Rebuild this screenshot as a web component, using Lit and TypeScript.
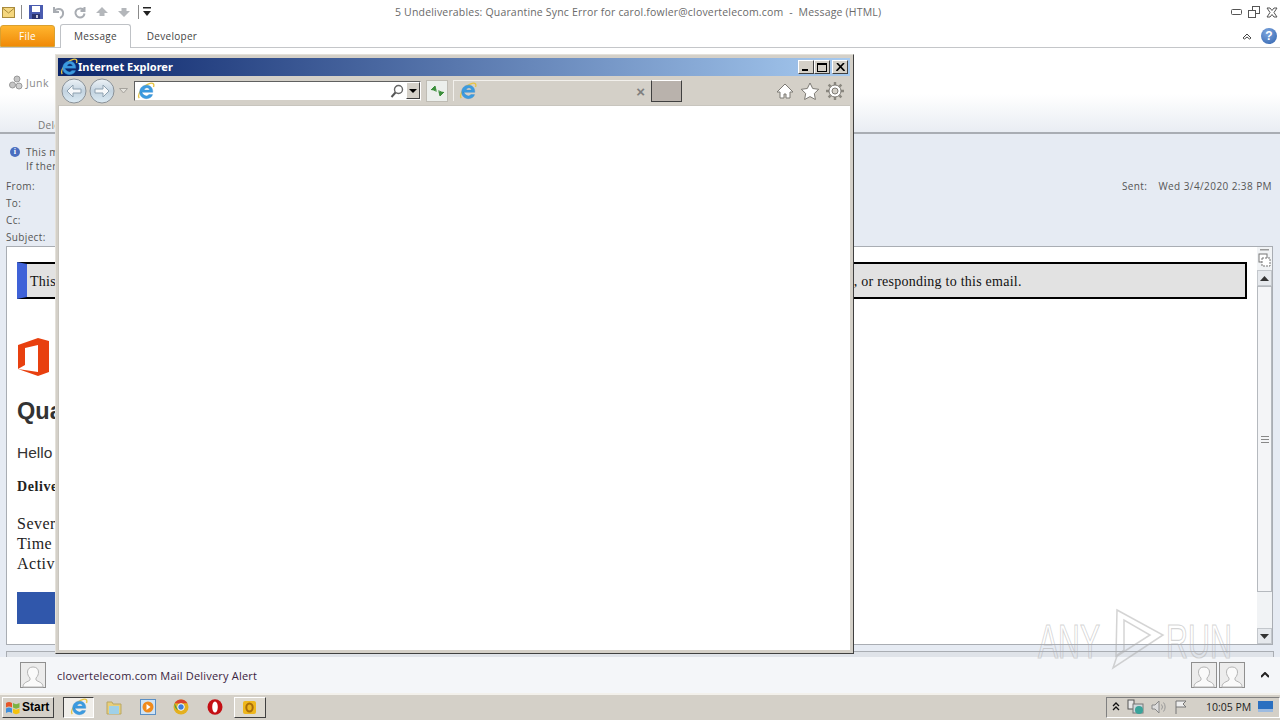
import { LitElement, html, css } from "lit";
import { customElement } from "lit/decorators.js";

const ieLogo = (s: number) => html`<svg width=${s} height=${s} viewBox="0 0 20 20">
  <path d="M2.500 18C-.5 14 7 3.500 14.500 1.500c3.500-1 5 .8 3.800 4" fill="none" stroke="#e6c445" stroke-width="1.500"/>
  <path d="M4.500 11.500h13c.4-5-2.800-8-7-8-4.500 0-7.500 3.300-7.500 7.700S6 18.500 10.500 18.500c3.500 0 6-1.600 6.800-4.500h-4.200c-.5 1-1.400 1.500-2.500 1.500-2 0-4.300-1.600-5.100-4zM8 9c.4-1.700 1.700-2.500 3-2.500S13.600 7.300 13.900 9z" fill="#3b9be0" fill-rule="evenodd" stroke="#2f83c8" stroke-width=".4"/>
</svg>`;
const person = () => html`<svg class="person" width="26" height="26" viewBox="0 0 26 26">
  <rect x=".5" y=".5" width="25" height="25" fill="#ececec" stroke="#8f8f8f"/>
  <path d="M3 25c0-5 5-5 7-7v-2c-2-2-2.500-4-2.500-6 0-3 2-5 5.500-5s5.500 2 5.500 5c0 2-.5 4-2.500 6v2c2 2 7 2 7 7z" fill="#fafafa" stroke="#b5b5b5"/>
</svg>`;
const navArrow = (dir: number) => html`<svg width="26" height="26" viewBox="0 0 26 26">
  <defs><linearGradient id="nv${dir}" x1="0" y1="0" x2="0" y2="1"><stop offset="0" stop-color="#eef3f7"/><stop offset=".5" stop-color="#c3d3e0"/><stop offset="1" stop-color="#dcebf4"/></linearGradient></defs>
  <circle cx="13" cy="13" r="12" fill="url(#nv${dir})" stroke="#8b9298"/>
  <path d=${dir < 0 ? "M6 13l6-6v4h8v4h-8v4z" : "M20 13l-6-6v4H6v4h8v4z"} fill="#f6f8fa" stroke="#8ea1b0"/>
</svg>`;

@customElement("app-root")
export class AppRoot extends LitElement {
  static styles = css`
    :host { display: block; width: 1280px; height: 720px; position: relative; overflow: hidden; background: #fff; font-family: "Open Sans", "Noto Sans", sans-serif; font-size: 10px; color: #444; }
    .page { display: flex; flex-direction: column; height: 720px; }
    .title { height: 24px; display: flex; align-items: center; flex: none; background: #fff; }
    .qat { display: flex; align-items: center; gap: 8px; padding-left: 2px; width: 388px; flex: none; box-sizing: content-box; }
    .sep { width: 1px; height: 14px; background: #8a8a8a; margin: 0 -1px; }
    .title-text { flex: 1; margin-left: 5px; font-size: 10.500px; color: #6a6a6a; letter-spacing: .18px; white-space: pre; }
    .winbtns { display: flex; gap: 6px; padding-right: 2px; align-items: center; }
    .tabs { height: 23px; flex: none; display: flex; align-items: flex-end; border-bottom: 1px solid #c4c6c9; box-sizing: content-box; position: relative; }
    .file { width: 55px; height: 22px; background: linear-gradient(#ffb52e, #f08a08); color: #fff; border-radius: 3px 3px 0 0; display: flex; align-items: center; justify-content: center; font-size: 10px; letter-spacing: .3px; border: 1px solid #d9a030; box-sizing: border-box; }
    .tab { height: 23px; display: flex; align-items: center; justify-content: center; font-size: 10px; letter-spacing: .3px; color: #444; box-sizing: border-box; }
    .tab.on { width: 71px; margin-left: 5px; background: #fff; border: 1px solid #bfc2c6; border-bottom: none; border-radius: 3px 3px 0 0; margin-bottom: -1px; height: 24px; padding-bottom: 2px; }
    .tab.dev { width: 82px; }
    .tabs-right { margin-left: auto; display: flex; align-items: center; gap: 9px; padding-right: 3px; align-self: center; }
    .help { width: 16px; height: 16px; border-radius: 50%; background: radial-gradient(circle at 40% 30%, #7ea6de, #2f62ae); color: #fff; font: bold 12px "Liberation Sans", sans-serif; display: flex; align-items: center; justify-content: center; }
    .ribbon { height: 86px; flex: none; background: linear-gradient(#fff 55%, #e9edf3); border-bottom: 2px solid #a9adb3; box-sizing: border-box; position: relative; display: flex; flex-direction: column; padding-left: 8px; }
    .junk { display: flex; align-items: center; gap: 3px; margin-top: 27px; color: #8a8a8a; font-size: 10.500px; letter-spacing: .4px; }
    .del { margin-top: 27px; margin-left: 30px; color: #777; font-size: 10px; letter-spacing: .3px; }
    .head { height: 112px; flex: none; background: #e6ebf3; position: relative; padding-left: 6px; box-sizing: border-box; display: flex; flex-direction: column; }
    .info { display: flex; gap: 6px; margin-top: 11px; margin-left: 4px; font-size: 10px; line-height: 14px; color: #555; letter-spacing: .35px; }
    .dot { width: 10px; height: 10px; margin-top: 2px; border-radius: 50%; background: #4b6fc0; color: #fff; font: bold 8px/10px "Liberation Serif", serif; text-align: center; }
    .fields { margin-top: 5px; line-height: 17px; font-size: 10px; color: #555; letter-spacing: .35px; }
    .sent { position: absolute; top: 45px; right: 8px; color: #555; font-size: 10px; letter-spacing: .42px; display: flex; gap: 11px; }
    .body { height: 399px; flex: none; background: #e6ebf3; padding: 0 0 0 6px; box-sizing: border-box; display: flex; }
    .mail { width: 1267px; height: 399px; background: #fff; border: 1px solid #a9adb3; box-sizing: border-box; padding: 15px 0 0 10px; position: relative; display: flex; flex-direction: column; font-family: "Liberation Serif", serif; color: #222; }
    .banner { width: 1230px; height: 37px; flex: none; box-sizing: border-box; border: 2px solid #000; border-left: 10px solid #3f62d8; background: #e2e2e2; display: flex; align-items: center; font-size: 14px; letter-spacing: .24px; color: #111; padding: 2px 0 0 3px; }
    .banner .end { margin-left: 798px; }
    .logo { margin-top: 39px; display: block; }
    h1 { margin: 20px 0 0; font: bold 23.500px/30px "Liberation Sans", sans-serif; color: #333; }
    .hello { margin-top: 17px; font: 15.500px/20px "Liberation Sans", sans-serif; color: #333; }
    .deliv { margin-top: 14px; font: bold 14px/20px "Liberation Serif", serif; letter-spacing: .6px; }
    .lines { margin-top: 17px; font: 16px/20px "Liberation Serif", serif; letter-spacing: .5px; }
    .cta { margin-top: 18px; width: 200px; height: 32px; background: #3057ab; }
    .scroll { position: absolute; right: 0; top: 0; width: 15px; height: 397px; background: #f1f3f5; display: flex; flex-direction: column; align-items: center; box-sizing: border-box; padding-top: 1px; }
    .scroll-tool { flex: none; height: 22px; }
    .scroll-btn { flex: none; width: 15px; height: 16px; background: #e6e9ed; border: 1px solid #c3c7cc; box-sizing: border-box; display: flex; align-items: center; justify-content: center; }
    .thumb { flex: none; width: 15px; height: 306px; background: #f4f5f7; border: 1px solid #b5b9be; box-sizing: border-box; display: flex; align-items: center; justify-content: center; }
    .scroll-btn.down { margin-top: auto; }
    .hsplit { height: 12px; flex: none; background: #e6ebf3; padding: 0 6px; box-sizing: border-box; }
    .hsplit div { height: 6px; margin-top: 6px; border: 1px solid #a9adb3; background: #dfe3e9; }
    .people { height: 36px; flex: none; background: #f4f6f9; display: flex; align-items: center; padding: 0 8px 0 20px; gap: 11px; font-size: 11px; letter-spacing: .2px; color: #3a2340; box-sizing: border-box; }
    .people .r { margin-left: auto; display: flex; align-items: center; gap: 2px; }
    .person { display: block; }
    .chev { margin-left: 14px; margin-right: 3px; }
    .taskbar { height: 27px; flex: none; background: #d4d0c8; border-top: 2px solid #f3f1ec; display: flex; align-items: center; padding: 0 0 1px 2px; box-sizing: border-box; }
    .start { width: 52px; height: 21px; background: #d4d0c8; border: 1px solid; border-color: #fff #404040 #404040 #fff; box-sizing: border-box; display: flex; align-items: center; gap: 1px; font: bold 12px "Liberation Sans", sans-serif; color: #000; padding-left: 2px; }
    .tb-ie { margin-left: 9px; width: 31px; height: 21px; border: 1px solid; border-color: #404040 #fff #fff #404040; background: #f0eeea; box-sizing: border-box; display: flex; align-items: center; justify-content: center; }
    .tb-icons { display: flex; align-items: center; gap: 17.500px; margin-left: 12px; }
    .tb-out { margin-left: 11px; width: 32px; height: 21px; border: 1px solid; border-color: #fff #404040 #404040 #fff; box-sizing: border-box; background: #ddd9d0; display: flex; align-items: center; justify-content: center; }
    .tray { margin-left: auto; height: 21px; width: 174px; border: 1px solid; border-color: #808080 #fff #fff #808080; box-sizing: border-box; display: flex; align-items: center; gap: 7px; padding-left: 5px; font-size: 10.500px; color: #222; }
    .clock { margin-left: 10px; white-space: nowrap; }

    .ie { position: absolute; left: 55px; top: 54px; width: 799px; height: 600px; box-sizing: border-box; background: #d4d0c8; border: 1px solid; border-color: #e4e1da #404040 #404040 #e4e1da; padding: 3px 3px 3px 2px; display: flex; flex-direction: column; }
    .ie-title { height: 18px; flex: none; background: linear-gradient(90deg, #0a246a, #a6caf0); display: flex; align-items: center; padding-left: 2px; color: #fff; font: bold 11px/18px "Noto Sans", sans-serif; }
    .ie-title span { margin-top: -1px; }
    .ie-btns { margin-left: auto; display: flex; padding-right: 2px; }
    .ie-btn { width: 16px; height: 14px; background: #d4d0c8; border: 1px solid; border-color: #fff #404040 #404040 #fff; box-sizing: border-box; display: flex; align-items: center; justify-content: center; }
    .ie-btn + .ie-btn:last-child { margin-left: 2px; }
    .ie-bar { height: 29px; flex: none; display: flex; align-items: center; padding-left: 3px; }
    .nav { display: flex; gap: 2px; }
    .hist { margin-left: 4px; }
    .addr { margin-left: 6px; width: 287px; height: 20px; box-sizing: border-box; background: #fff; border: 1px solid; border-color: #606060 #fff #d4d0c8 #606060; display: flex; align-items: center; padding-left: 2px; }
    .addr .search { margin-left: auto; margin-right: 2px; }
    .addr .drop { width: 14px; height: 17px; background: #d4d0c8; border: 1px solid; border-color: #fff #404040 #404040 #fff; box-sizing: border-box; display: flex; align-items: center; justify-content: center; }
    .go { margin-left: 5px; width: 22px; height: 22px; background: #ecefec; border: 1px solid #bfbcb4; box-sizing: border-box; display: flex; align-items: center; justify-content: center; }
    .tabz { margin-left: 5px; width: 198px; height: 21px; display: flex; align-items: center; padding-left: 5px; box-sizing: border-box; border-left: 1px solid #f2f0ec; border-top: 1px solid #f2f0ec; }
    .tabz .x { margin-left: auto; margin-right: 6px; font: bold 15px "Liberation Sans", sans-serif; color: #7f7f7f; line-height: 1; }
    .newtab { width: 31px; height: 22px; background: #b9b2ac; border: 1px solid; border-color: #fff #404040 #404040 #404040; box-sizing: border-box; }
    .ie-tools { margin-left: auto; display: flex; gap: 5px; padding-right: 5px; align-items: center; }
    .ie-content { flex: 1; background: #fff; border: 1px solid #c8c5be; border-width: 1px 0 0 1px; }
    .mark { position: absolute; left: 1032px; top: 606px; pointer-events: none; display: block; }
    .mark text { font: 48px "Liberation Sans", sans-serif; fill: none; stroke: rgba(170,170,170,.5); stroke-width: 1.200px; }
  `;

  render() {
    return html`
      <div class="page">
        <div class="title">
          <div class="qat">
            <svg width="13" height="11" viewBox="0 0 13 11"><rect x=".5" y=".5" width="12" height="10" fill="#f5d77f" stroke="#a98b3c"/><path d="M.5 1l6 5 6-5" fill="none" stroke="#a98b3c"/></svg>
            <span class="sep" style="margin-left:-2px"></span>
            <svg width="14" height="14" viewBox="0 0 14 14"><rect width="14" height="14" fill="#4a5cb0"/><rect x="3" y="1" width="8" height="6" fill="#fff"/><rect x="3" y="9" width="8" height="5" fill="#2b346f"/><rect x="7" y="10" width="2" height="3" fill="#ccd"/></svg>
            <svg width="14" height="14" viewBox="0 0 14 14"><path d="M3 2v5h5M3 6.500C5 3 11 3 12 7c.5 3-1 5-3 6" fill="none" stroke="#a8acb2" stroke-width="2"/></svg>
            <svg width="14" height="14" viewBox="0 0 14 14"><path d="M11.500 2v4h-4M11 5.500C9 2.500 3.500 3 2.500 7c-.5 3 2 5.500 4.500 5.500S11 11 11.500 8.500" fill="none" stroke="#a8acb2" stroke-width="2"/></svg>
            <svg width="14" height="12" viewBox="0 0 14 12"><path d="M7 1l6 6H9.500v3h-5V7H1z" fill="#b4b7bb"/></svg>
            <svg width="14" height="12" viewBox="0 0 14 12"><path d="M7 11l6-6H9.500V2h-5v3H1z" fill="#b4b7bb"/></svg>
            <span class="sep"></span>
            <svg style="margin-left:-3px" width="8" height="10" viewBox="0 0 8 10"><rect y="0" width="8" height="1.500" fill="#222"/><path d="M0 4h8L4 9z" fill="#222"/></svg>
          </div>
          <div class="title-text">5 Undeliverables: Quarantine Sync Error for carol.fowler@clovertelecom.com  -  Message (HTML)</div>
          <div class="winbtns">
            <svg width="11" height="6" viewBox="0 0 11 6"><rect x=".5" y=".5" width="10" height="5" rx="1" fill="#fff" stroke="#555"/></svg>
            <svg width="12" height="12" viewBox="0 0 12 12"><rect x="4.500" y=".5" width="7" height="7" fill="#fff" stroke="#555"/><rect x=".5" y="4.500" width="7" height="7" fill="#fff" stroke="#555"/></svg>
            <svg width="12" height="11" viewBox="0 0 12 11"><path d="M1 1h3l2 2.500L8 1h3L8 5.500l3 4.500H8L6 7.500 4 10H1l3-4.500z" fill="#fff" stroke="#555"/></svg>
          </div>
        </div>
        <div class="tabs">
          <div class="file">File</div>
          <div class="tab on">Message</div>
          <div class="tab dev">Developer</div>
          <div class="tabs-right">
            <svg width="10" height="8" viewBox="0 0 10 8"><path d="M1 6l4-4 4 4-1.500 1L5 5 2.500 7z" fill="#fff" stroke="#444"/></svg>
            <div class="help">?</div>
          </div>
        </div>
        <div class="ribbon">
          <div class="junk">
            <svg width="15" height="16" viewBox="0 0 15 16"><circle cx="9" cy="4" r="3" fill="#c5c5c5" stroke="#999"/><circle cx="4.500" cy="10" r="3" fill="#c5c5c5" stroke="#999"/><circle cx="11" cy="11" r="3" fill="#d0d0d0" stroke="#999"/></svg>
            Junk
          </div>
          <div class="del">Delete</div>
        </div>
        <div class="head">
          <div class="info"><div class="dot">i</div><div>This message<br />If there are problems</div></div>
          <div class="fields">From:<br />To:<br />Cc:<br />Subject:</div>
          <div class="sent"><span>Sent:</span><span>Wed 3/4/2020 2:38 PM</span></div>
        </div>
        <div class="body">
          <div class="mail">
            <div class="banner"><span>This</span><span class="end">, or responding to this email.</span></div>
            <svg class="logo" width="33" height="38" viewBox="0 0 33 38"><path d="M1 7L21 0l11 3v31l-11 4L1 31l20 3V7L8 10v17l-7 4z" fill="#e8400f"/></svg>
            <h1>Quarantine</h1>
            <div class="hello">Hello</div>
            <div class="deliv">Delivery</div>
            <div class="lines">Severity<br />Time<br />Activity</div>
            <div class="cta"></div>
            <div class="scroll">
              <svg class="scroll-tool" width="15" height="22" viewBox="0 0 15 22"><rect x="3" y="1" width="9" height="1.500" fill="#999"/><rect x="2" y="6" width="8" height="8" fill="#fff" stroke="#777"/><rect x="5" y="10" width="8" height="8" fill="#fff" stroke="#777" stroke-dasharray="2 1"/></svg>
              <div class="scroll-btn"><svg width="9" height="5" viewBox="0 0 9 5"><path d="M0 5l4.500-5L9 5z" fill="#333"/></svg></div>
              <div class="thumb"><svg width="8" height="7" viewBox="0 0 8 7"><path d="M0 .5h8M0 3.500h8M0 6.500h8" stroke="#888"/></svg></div>
              <div class="scroll-btn down"><svg width="9" height="5" viewBox="0 0 9 5"><path d="M0 0l4.500 5L9 0z" fill="#333"/></svg></div>
            </div>
          </div>
        </div>
        <div class="hsplit"><div></div></div>
        <div class="people">
          ${person()}
          <span>clovertelecom.com Mail Delivery Alert</span>
          <div class="r">
            ${person()}${person()}
            <svg class="chev" width="8" height="6" viewBox="0 0 8 6"><path d="M0 5l4-4 4 4" fill="none" stroke="#222" stroke-width="2"/></svg>
          </div>
        </div>
        <div class="taskbar">
          <div class="start">
            <svg width="16" height="16" viewBox="0 0 16 16"><path d="M1 4c2-1.500 4-1.500 6 0v4.500c-2-1.500-4-1.500-6 0z" fill="#e5562a"/><path d="M8 4c2 1.500 4 1.500 6.500 0v4.500c-2.500 1.500-4.500 1.500-6.500 0z" fill="#7cb342"/><path d="M1 9.500c2-1.500 4-1.500 6 0V14c-2-1.500-4-1.500-6 0z" fill="#3f8fdc"/><path d="M8 9.500c2 1.500 4 1.500 6.500 0V14c-2.500 1.500-4.500 1.500-6.500 0z" fill="#f4c20d"/></svg>
            Start
          </div>
          <div class="tb-ie">${ieLogo(18)}</div>
          <div class="tb-icons">
            <svg width="16" height="15" viewBox="0 0 16 15"><path d="M1 2h5l1 2h8v10H1z" fill="#e8cf7a" stroke="#b9a765"/><rect x="3" y="6" width="10" height="8" fill="#9fd0e8"/></svg>
            <svg width="16" height="16" viewBox="0 0 16 16"><rect x=".5" y=".5" width="15" height="15" fill="#cfe3f5" stroke="#5a8fc5"/><circle cx="8" cy="8" r="5.500" fill="#f08a1c"/><path d="M6.500 5l4 3-4 3z" fill="#fff"/></svg>
            <svg width="16" height="16" viewBox="0 0 16 16"><circle cx="8" cy="8" r="7.500" fill="#e4b01f"/><path d="M8 .5A7.500 7.500 0 0 1 14.500 4.300H8z" fill="#d9432f"/><path d="M1.500 4.300A7.500 7.500 0 0 1 8 .5v4z" fill="#d9432f"/><path d="M1.500 4.300L5 11.500A7.500 7.500 0 0 1 1.500 4.300z" fill="#3aa04d"/><circle cx="8" cy="8" r="3.300" fill="#3f7fdc" stroke="#fff"/></svg>
            <svg width="16" height="16" viewBox="0 0 16 16"><ellipse cx="8" cy="8" rx="7.500" ry="7.800" fill="#c40f14"/><ellipse cx="8" cy="8" rx="2.800" ry="5.500" fill="#fff"/></svg>
          </div>
          <div class="tb-out">
            <svg width="15" height="15" viewBox="0 0 15 15"><rect x="1" y="1" width="13" height="13" rx="2" fill="#eeb71d"/><ellipse cx="7.500" cy="7.500" rx="3.200" ry="4" fill="none" stroke="#a86d0a" stroke-width="2"/></svg>
          </div>
          <div class="tray">
            <svg width="8" height="10" viewBox="0 0 8 10"><path d="M1 4l3-3 3 3M1 8l3-3 3 3" fill="none" stroke="#111" stroke-width="1.300"/></svg>
            <svg width="17" height="16" viewBox="0 0 17 16"><rect x="1" y="1" width="6" height="9" fill="#e8e8e8" stroke="#555"/><rect x="6" y="5" width="10" height="9" fill="#cfd8dc" stroke="#777"/><circle cx="12" cy="11" r="4" fill="#3aa39a"/></svg>
            <svg width="16" height="14" viewBox="0 0 16 14"><path d="M1 5h3l4-4v12L4 9H1z" fill="#ddd" stroke="#888"/><path d="M10.500 4.500a4 4 0 0 1 0 5M12.500 2.500a7 7 0 0 1 0 9" fill="none" stroke="#999"/></svg>
            <svg width="15" height="14" viewBox="0 0 15 14"><path d="M2 1v13M2 1h10l-3 3 3 3H2" fill="#eee" stroke="#777"/></svg>
            <span class="clock">10:05 PM</span>
            <svg width="15" height="12" viewBox="0 0 15 12"><rect width="15" height="11" fill="#2a6fc0"/><rect y="8" width="15" height="3" fill="#9dbbe0"/></svg>
          </div>
        </div>
      </div>

      <svg class="mark" width="248" height="66" viewBox="0 0 248 66" aria-hidden="true">
        <text x="6" y="52" textLength="62" lengthAdjust="spacingAndGlyphs">ANY</text>
        <path d="M85 4L131 29 81 62 85 50 118 29 92 14 92 44 84 50z" fill="none" stroke="rgba(170,170,170,.5)" stroke-width="1.500"/>
        <text x="134" y="52" textLength="66" lengthAdjust="spacingAndGlyphs">RUN</text>
      </svg>

      <div class="ie">
        <div class="ie-title">
          ${ieLogo(18)}<span>Internet Explorer</span>
          <div class="ie-btns">
            <div class="ie-btn"><svg width="8" height="8" viewBox="0 0 8 8"><rect x="0" y="6" width="6" height="2" fill="#000"/></svg></div>
            <div class="ie-btn"><svg width="10" height="9" viewBox="0 0 10 9"><rect x=".5" y="1" width="9" height="7.500" fill="none" stroke="#000"/><rect y="0" width="10" height="2" fill="#000"/></svg></div>
            <div class="ie-btn"><svg width="9" height="8" viewBox="0 0 9 8"><path d="M1 0l7.500 8M8 0L.5 8" stroke="#000" stroke-width="1.600"/></svg></div>
          </div>
        </div>
        <div class="ie-bar">
          <div class="nav">${navArrow(-1)}${navArrow(1)}</div>
          <svg class="hist" width="9" height="6" viewBox="0 0 9 6"><path d="M.5.5h8L4.500 5z" fill="#e4e2dc" stroke="#a5a29c"/></svg>
          <div class="addr">
            ${ieLogo(18)}
            <svg class="search" width="14" height="14" viewBox="0 0 14 14"><circle cx="8.500" cy="5.500" r="4" fill="#fff" stroke="#666" stroke-width="1.400"/><path d="M5.500 8.500L1.500 13" stroke="#555" stroke-width="2"/></svg>
            <div class="drop"><svg width="8" height="4" viewBox="0 0 8 4"><path d="M0 0h8L4 4z" fill="#000"/></svg></div>
          </div>
          <div class="go"><svg width="15" height="12" viewBox="0 0 15 12"><path d="M1 5l4-4 1 4-2 0c1 1 2 1 3 1M14 7l-4 4-1-4 2 0c-1-1-2-1-3-1" fill="#3c8f3c" stroke="#3c8f3c"/></svg></div>
          <div class="tabz">${ieLogo(18)}<span class="x">×</span></div>
          <div class="newtab"></div>
          <div class="ie-tools">
            <svg width="20" height="18" viewBox="0 0 20 18"><path d="M10 2L2 10h3v6h4v-4h2v4h4v-6h3z" fill="#fff" stroke="#7d7a74"/></svg>
            <svg width="20" height="18" viewBox="0 0 20 18"><path d="M10 1l2.700 5.500 6 .8-4.400 4.200 1.100 6L10 14.600 4.600 17.500l1.100-6L1.300 7.300l6-.8z" fill="#fff" stroke="#7d7a74"/></svg>
            <svg width="20" height="20" viewBox="0 0 20 20"><path d="M10 1v3M10 16v3M1 10h3M16 10h3M3.600 3.600l2.100 2.100M14.300 14.300l2.100 2.100M16.400 3.600l-2.100 2.100M5.700 14.300l-2.100 2.100" stroke="#8a877f" stroke-width="2.400"/><circle cx="10" cy="10" r="6" fill="#fff" stroke="#7d7a74"/><circle cx="10" cy="10" r="3" fill="#d4d0c8" stroke="#7d7a74"/></svg>
          </div>
        </div>
        <div class="ie-content"></div>
      </div>
    `;
  }
}
